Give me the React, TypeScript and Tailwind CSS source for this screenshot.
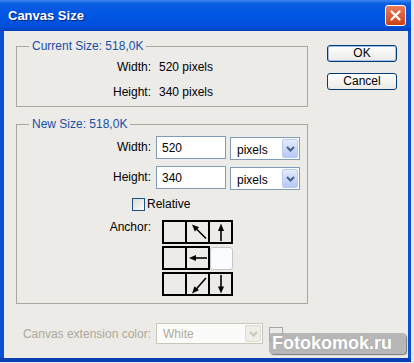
import React from "react";

function Chevron({ color }: { color: string }) {
  return (
    <svg width="9" height="6" viewBox="0 0 9 6">
      <path d="M1 1 L4.5 4.5 L8 1" stroke={color} strokeWidth="2" fill="none" />
    </svg>
  );
}

function Combo({ label }: { label: string }) {
  return (
    <div className="w-[70px] h-[23px] mt-[1px] border border-[#7f9db9] bg-white flex items-stretch p-[1px]">
      <div className="flex-1 pl-[5px] pt-[3px] flex items-center text-[12px] text-black">{label}</div>
      <div className="w-[16px] rounded-[2px] border border-[#b9cbf3] bg-linear-to-b from-[#e4ecfd] to-[#b4c8f6] flex items-center justify-center">
        <Chevron color="#4a5f8c" />
      </div>
    </div>
  );
}

function TextBox({ value }: { value: string }) {
  return (
    <div className="w-[70px] h-[23px] border border-[#7f9db9] bg-white pl-[5px] flex items-center text-[12px] text-black">
      {value}
    </div>
  );
}

type Arrow = "ul" | "u" | "l" | "dl" | "d" | null;

function ArrowSvg({ kind }: { kind: Arrow }) {
  if (!kind) return null;
  const common = { stroke: "#000", strokeWidth: 1.6, fill: "none" } as const;
  return (
    <svg width="21" height="20" viewBox="0 0 21 20" className="block">
      {kind === "u" && (
        <>
          <line x1="11" y1="5" x2="11" y2="19" {...common} />
          <polygon points="11,1.5 8,9 14,9" fill="#000" />
        </>
      )}
      {kind === "d" && (
        <>
          <line x1="11" y1="1" x2="11" y2="15" {...common} />
          <polygon points="11,19.5 8,12.5 14,12.5" fill="#000" />
        </>
      )}
      {kind === "l" && (
        <>
          <line x1="6" y1="10" x2="20" y2="10" {...common} />
          <polygon points="2,10 9,7 9,13" fill="#000" />
        </>
      )}
      {kind === "ul" && (
        <>
          <line x1="8" y1="5.5" x2="19" y2="16.5" {...common} />
          <polygon points="5,2.5 12.1,5.3 7.8,9.6" fill="#000" />
        </>
      )}
      {kind === "dl" && (
        <>
          <line x1="8" y1="16.5" x2="19" y2="4" {...common} />
          <polygon points="5,19.5 11.9,16.3 7.5,12.3" fill="#000" />
        </>
      )}
    </svg>
  );
}

function Cell({ kind, first }: { kind: Arrow; first?: boolean }) {
  return (
    <div
      className={
        "w-[25px] h-[24px] border-2 border-black flex items-center justify-center " +
        (first ? "" : "-ml-[2px]")
      }
    >
      <ArrowSvg kind={kind} />
    </div>
  );
}

export default function App() {
  return (
    <div className="w-[414px] h-[363px] bg-[#e3e8f2] font-['Liberation_Sans',Arial,sans-serif] relative overflow-hidden">
      <div className="w-[411px] h-[362px] flex flex-col bg-[#0b4fd6] border-b-[4px] border-b-[#0a3fb4]">
        {/* Title bar */}
        <div className="h-[31px] shrink-0 flex items-center justify-between pl-[8px] pr-[5px] bg-[linear-gradient(to_bottom,#3d86f2_0%,#0a5ce0_12%,#0055e3_50%,#0050dc_85%,#0040bb_100%)]">
          <span className="text-white font-bold text-[13px] [text-shadow:1px_1px_0_#0a2378]">Canvas Size</span>
          <div className="w-[21px] h-[21px] rounded-[3px] border border-white bg-linear-to-b from-[#ea7b5c] to-[#c8400f] flex items-center justify-center">
            <svg width="11" height="11" viewBox="0 0 11 11">
              <path d="M1.5 1.5 L9.5 9.5 M9.5 1.5 L1.5 9.5" stroke="#fff" strokeWidth="2.2" strokeLinecap="round" />
            </svg>
          </div>
        </div>
        {/* Client */}
        <div className="flex-1 ml-[4px] mr-[3px] bg-[#ecebe8] flex text-[12px] text-black">
          <div className="ml-[12px] mt-[8px] w-[292px] flex flex-col">
            <fieldset className="border border-[#a9a89f] w-[292px]">
              <legend className="ml-[12px] px-[3px] text-[12px] leading-[14px] text-[#1b4ea3]">Current Size: 518,0K</legend>
              <div className="grid grid-cols-[134px_auto] gap-x-[8px] gap-y-[5px] pt-[4px] pb-[4px] leading-[20px]">
                <div className="text-right">Width:</div>
                <div>520 pixels</div>
                <div className="text-right">Height:</div>
                <div>340 pixels</div>
              </div>
            </fieldset>

            <fieldset className="mt-[10px] border border-[#a9a89f] w-[292px]">
              <legend className="ml-[12px] px-[3px] text-[12px] leading-[14px] text-[#1b4ea3]">New Size: 518,0K</legend>
              <div className="grid grid-cols-[134px_auto] gap-x-[5px] gap-y-[6px] pt-[5px]">
                <div className="text-right leading-[23px]">Width:</div>
                <div className="flex items-start gap-[4px]">
                  <TextBox value="520" />
                  <Combo label="pixels" />
                </div>
                <div className="text-right leading-[23px]">Height:</div>
                <div className="flex items-start gap-[4px]">
                  <TextBox value="340" />
                  <Combo label="pixels" />
                </div>
              </div>
              <div className="mt-[7px] ml-[115px] h-[14px] flex items-center gap-[2px]">
                <div className="w-[13px] h-[13px] border border-[#1c5180] bg-linear-to-br from-[#dcdcd7] to-[#fbfbf9]" />
                <span className="leading-[14px]">Relative</span>
              </div>
              <div className="mt-[9px] pb-[7px] grid grid-cols-[134px_auto] gap-x-[11px]">
                <div className="text-right leading-[14px]">Anchor:</div>
                <div className="flex flex-col gap-[2px]">
                  <div className="flex">
                    <Cell kind={null} first />
                    <Cell kind="ul" />
                    <Cell kind="u" />
                  </div>
                  <div className="flex items-center">
                    <Cell kind={null} first />
                    <Cell kind="l" />
                    <div className="w-[23px] h-[23px] rounded-[3px] border border-[#c6c6c6] bg-[#fbfcff]" />
                  </div>
                  <div className="flex">
                    <Cell kind={null} first />
                    <Cell kind="dl" />
                    <Cell kind="d" />
                  </div>
                </div>
              </div>
            </fieldset>

            <div className="mt-[19px] flex items-center">
              <div className="w-[135px] text-right text-[#aca899]">Canvas extension color:</div>
              <div className="ml-[5px] w-[107px] h-[21px] border border-[#c9c7ba] bg-[#fbfbf9] flex items-stretch p-[1px]">
                <div className="flex-1 pl-[5px] flex items-center text-[#acaba3]">White</div>
                <div className="w-[16px] rounded-[2px] border border-[#dedcd2] bg-[#efeee8] flex items-center justify-center">
                  <Chevron color="#c9c7bb" />
                </div>
              </div>
              <div className="ml-[6px] w-[14px] h-[14px] border border-[#a3a3a3]" />
            </div>
          </div>

          <div className="ml-[19px] mt-[14px] flex flex-col gap-[11px]">
            <button className="w-[70px] h-[17px] rounded-[3px] border border-[#003c74] bg-linear-to-b from-[#ffffff] to-[#ebeae5] shadow-[inset_0_0_0_1px_#a8c1ec] text-[12px] leading-[15px] text-black">
              OK
            </button>
            <button className="w-[70px] h-[17px] rounded-[3px] border border-[#003c74] bg-linear-to-b from-[#ffffff] to-[#ebeae5] text-[12px] leading-[15px] text-black">
              Cancel
            </button>
          </div>
        </div>
      </div>

      {/* watermark */}
      <div className="absolute left-[269px] top-[333px] w-[137px] h-[21px] rounded-[4px] bg-[rgba(170,170,170,0.8)] shadow-[1px_1px_1px_rgba(70,70,70,0.7)] pl-[3px] text-white font-bold text-[18px] leading-[21px] [text-shadow:0_0_1px_#999]">
        Fotokomok.ru
      </div>
    </div>
  );
}
